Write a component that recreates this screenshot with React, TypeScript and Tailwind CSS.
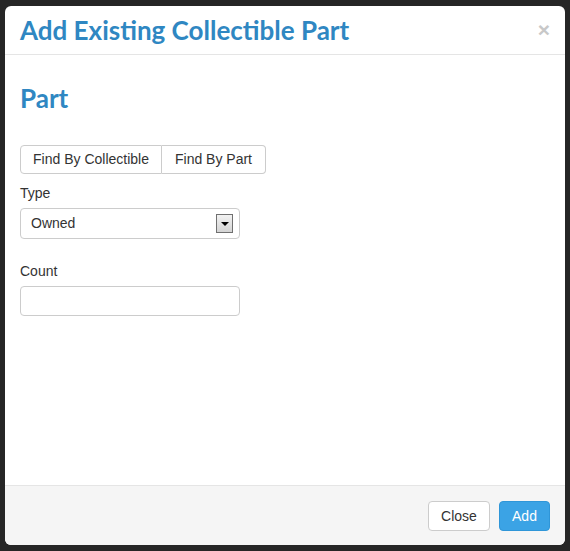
// Modal: add an existing collectible part
export default function App() {
  return (
    <div className="w-[570px] h-[551px] bg-[#262626] pt-[6px] pl-[5px] pr-[5px] pb-[6px]" style={{ fontFamily: '"Liberation Sans", Arial, sans-serif' }}>
      <div className="w-[560px] h-[539px] bg-white rounded-[6px] flex flex-col overflow-hidden">
        {/* header */}
        <div className="h-[49px] border-b border-[#e5e5e5] flex items-center justify-between pl-[15px] pr-[15px]">
          <h3 className="text-[26px] leading-none font-bold text-[#2f87c2] -mt-[1px]" style={{ fontFamily: 'Lato, sans-serif' }}>
            Add Existing Collectible Part
          </h3>
          <span className="text-[21px] font-bold text-[#c8c8c8] leading-none -mt-[2px]">×</span>
        </div>

        {/* body */}
        <div className="flex-1 px-[15px] pt-[30px]">
          <h2 className="text-[26px] leading-none font-bold text-[#2f87c2]" style={{ fontFamily: 'Lato, sans-serif' }}>
            Part
          </h2>

          <div className="mt-[34px] flex">
            <button className="h-[29px] w-[142px] text-[14px] text-[#333] bg-white border border-[#ccc] rounded-l-[4px]">
              Find By Collectible
            </button>
            <button className="h-[29px] w-[104px] text-[14px] text-[#333] bg-white border border-[#ccc] border-l-0 rounded-r-[4px]">
              Find By Part
            </button>
          </div>

          <div className="mt-[9px] text-[14px] text-[#333] leading-[20px]">Type</div>
          <div className="mt-[5px] w-[220px] h-[31px] border border-[#ccc] rounded-[4px] flex items-center justify-between pl-[10px] pr-[6px]">
            <span className="text-[14px] text-[#333]">Owned</span>
            <div className="w-[17px] h-[19px] border border-[#707070] bg-gradient-to-b from-[#f2f2f2] to-[#d4d4d4] flex items-center justify-center">
              <div className="w-0 h-0 border-l-[4px] border-r-[4px] border-t-[4px] border-l-transparent border-r-transparent border-t-black mt-[1px]" />
            </div>
          </div>

          <div className="mt-[22px] text-[14px] text-[#333] leading-[20px]">Count</div>
          <div className="mt-[5px] w-[220px] h-[30px] border border-[#ccc] rounded-[4px]" />
        </div>

        {/* footer */}
        <div className="h-[60px] bg-[#f5f5f5] border-t border-[#e5e5e5] flex items-center justify-end gap-[9px] pr-[15px] pt-[1px]">
          <button className="h-[30px] w-[62px] text-[14px] text-[#333] bg-white border border-[#ccc] rounded-[4px]">
            Close
          </button>
          <button className="h-[30px] w-[51px] text-[14px] text-white bg-[#3ba3e5] border border-[#2f96d8] rounded-[4px]">
            Add
          </button>
        </div>
      </div>
    </div>
  )
}
